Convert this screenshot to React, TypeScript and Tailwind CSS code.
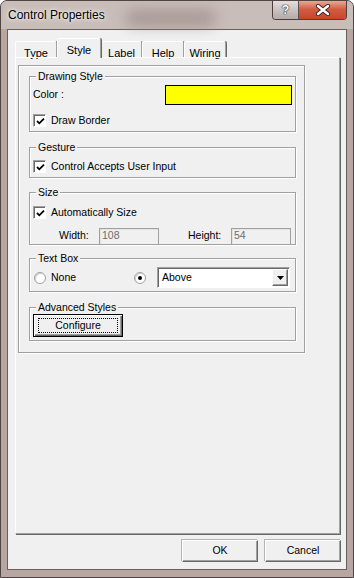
import type { ReactNode } from 'react'

const font = "font-['Liberation_Sans',Arial,sans-serif]"

function CheckBox({ checked }: { checked: boolean }) {
  return (
    <span className="flex h-[13px] w-[13px] shrink-0 items-center justify-center border border-t-[#a0a0a0] border-l-[#a0a0a0] border-r-white border-b-white bg-white shadow-[inset_1px_1px_0_#696969]">
      {checked && (
        <svg width="9" height="9" viewBox="0 0 9 9" className="ml-[1px] mt-[1px]">
          <polyline points="1,4 3.3,6.3 8,1.6" fill="none" stroke="#000" strokeWidth="1.8" />
        </svg>
      )}
    </span>
  )
}

function Radio({ checked }: { checked: boolean }) {
  return (
    <span className="flex h-[12px] w-[12px] shrink-0 items-center justify-center rounded-full border border-[#a0a0a0] bg-white shadow-[inset_1px_1px_0_#d0d0d0]">
      {checked && <span className="h-[4px] w-[4px] rounded-full bg-black" />}
    </span>
  )
}

function Group({ label, className, children }: { label: string; className: string; children: ReactNode }) {
  return (
    <div className={`relative border border-[#a0a0a0] shadow-[inset_1px_1px_0_#fff,1px_1px_0_#fff] ${className}`}>
      <span className="absolute -top-[7px] left-[6px] bg-[#f0f0f0] px-[2px] leading-[13px]">{label}</span>
      {children}
    </div>
  )
}

function Tab({ label, selected, width }: { label: string; selected?: boolean; width: string }) {
  if (selected) {
    return (
      <div
        className={`relative z-10 -mb-[1px] flex h-[20px] ${width} justify-center rounded-t-[2px] border-t border-l border-white border-r border-r-[#a0a0a0] bg-[#f0f0f0] pt-[3px] text-[11px] shadow-[1px_0_0_#696969]`}
      >
        {label}
      </div>
    )
  }
  return (
    <div
      className={`flex h-[16px] ${width} justify-center rounded-t-[2px] border-t border-l border-white border-r border-r-[#a0a0a0] bg-[#f0f0f0] pt-[3px] text-[11px] shadow-[1px_0_0_#696969]`}
    >
      {label}
    </div>
  )
}

function PushButton({ label, width }: { label: string; width: string }) {
  return (
    <div
      className={`flex h-[22px] ${width} items-center justify-center border border-t-white border-l-white border-r-[#696969] border-b-[#696969] bg-[#f0f0f0] shadow-[inset_-1px_-1px_0_#a0a0a0,-1px_-1px_0_#b5b5b5]`}
    >
      {label}
    </div>
  )
}

export default function App() {
  return (
    <div className={`${font} flex h-[578px] w-[354px] flex-col overflow-hidden rounded-t-[7px] border border-[#4f4644] bg-[#b8a6a2] text-[10.5px] text-black`}>
      {/* title bar */}
      <div className="relative flex h-[28px] shrink-0 items-center bg-[#c9bdb9] pl-[7px]">
        <div className="absolute left-[125px] top-[9px] h-[16px] w-[90px] rounded-full bg-[#8f807a] opacity-60 blur-[7px]" />
        <span className="relative text-[12px] [text-shadow:0_0_6px_#fff,0_0_3px_#fff]">Control Properties</span>
        <div className="absolute right-[6px] top-[-1px] flex h-[20px] overflow-hidden rounded-b-[4px] border border-t-0 border-[#4a3f3d]">
          <div className="flex w-[26px] items-center justify-center border-r border-[#5b5150] bg-gradient-to-b from-[#e6e2e1] via-[#cbc4c2] to-[#b5aba9]">
            <span className="text-[13px] font-bold leading-none text-white [text-shadow:0_0_1px_#222,0_0_1px_#222,0_0_1px_#222]">?</span>
          </div>
          <div className="flex w-[47px] items-center justify-center bg-gradient-to-b from-[#eab0a0] via-[#d05b40] to-[#c9452a]">
            <svg width="16" height="12" viewBox="0 0 16 12">
              <path d="M3 2 L13 10 M13 2 L3 10" stroke="#3a2420" strokeWidth="4.2" strokeLinecap="round" />
              <path d="M3 2 L13 10 M13 2 L3 10" stroke="#fff" strokeWidth="2.4" strokeLinecap="round" />
            </svg>
          </div>
        </div>
      </div>

      {/* client area */}
      <div className="mx-[6px] mb-[7px] flex flex-1 flex-col border border-[#6b5e5b] bg-[#f0f0f0]">
        <div className="ml-[7px] mt-[8px] flex h-[19px] items-end">
          <Tab label="Type" width="w-[42px]" />
          <Tab label="Style" width="w-[44px]" selected />
          <Tab label="Label" width="w-[41px]" />
          <Tab label="Help" width="w-[42px]" />
          <Tab label="Wiring" width="w-[42px]" />
        </div>

        <div className="ml-[7px] mr-[6px] h-[477px] border border-t-white border-l-white border-r-[#a0a0a0] border-b-[#a0a0a0] shadow-[1px_1px_0_#696969]">
          <div className="ml-[2px] mt-[7px] w-[287px] border border-[#a0a0a0] pb-[11px] pl-[10px] pr-[8px] pt-[10px] shadow-[inset_1px_1px_0_#fff,1px_1px_0_#fff]">
            <Group label="Drawing Style" className="h-[56px] pl-[3px] pr-[3px] pt-[8px]">
              <div className="flex h-[20px] items-center justify-between">
                <span>Color :</span>
                <span className="h-[20px] w-[127px] border border-black bg-[#ffff00]" />
              </div>
              <div className="mt-[8px] flex items-center gap-[5px]">
                <CheckBox checked />
                <span>Draw Border</span>
              </div>
            </Group>

            <Group label="Gesture" className="mt-[15px] h-[31px] pl-[3px] pt-[11px]">
              <div className="flex items-center gap-[5px]">
                <CheckBox checked />
                <span>Control Accepts User Input</span>
              </div>
            </Group>

            <Group label="Size" className="mt-[14px] h-[53px] pl-[3px] pt-[12px]">
              <div className="flex items-center gap-[5px]">
                <CheckBox checked />
                <span>Automatically Size</span>
              </div>
              <div className="mt-[7px] flex h-[17px] items-center">
                <span className="ml-[26px] w-[40px]">Width:</span>
                <span className="flex h-[17px] w-[60px] items-center border border-[#a0a0a0] pl-[2px] text-[#6d6d6d] shadow-[inset_1px_1px_0_#e3e3e3]">108</span>
                <span className="ml-[29px] w-[43px]">Height:</span>
                <span className="flex h-[17px] w-[60px] items-center border border-[#a0a0a0] pl-[2px] text-[#6d6d6d] shadow-[inset_1px_1px_0_#e3e3e3]">54</span>
              </div>
            </Group>

            <Group label="Text Box" className="mt-[13px] h-[34px] pt-[8px]">
              <div className="flex h-[21px] items-center">
                <span className="ml-[4px]">
                  <Radio checked={false} />
                </span>
                <span className="ml-[5px] w-[26px]">None</span>
                <span className="ml-[57px]">
                  <Radio checked />
                </span>
                <div className="ml-[11px] flex h-[21px] w-[133px] items-center border border-t-[#a0a0a0] border-l-[#a0a0a0] border-r-white border-b-white bg-white shadow-[inset_1px_1px_0_#696969]">
                  <span className="ml-[4px] flex-1">Above</span>
                  <span className="mr-[1px] flex h-[17px] w-[16px] items-center justify-center border border-t-white border-l-white border-r-[#696969] border-b-[#696969] bg-[#f0f0f0] shadow-[inset_-1px_-1px_0_#a0a0a0]">
                    <svg width="7" height="4" viewBox="0 0 7 4">
                      <polygon points="0,0 7,0 3.5,4" fill="#000" />
                    </svg>
                  </span>
                </div>
              </div>
            </Group>

            <Group label="Advanced Styles" className="mt-[15px] h-[34px] pl-[3px] pt-[6px]">
              <div className="flex h-[23px] w-[90px] items-center justify-center border border-black bg-[#f0f0f0] shadow-[inset_1px_1px_0_#fff,inset_-1px_-1px_0_#696969,inset_-2px_-2px_0_#a0a0a0]">
                <span className="flex h-[15px] w-[80px] items-center justify-center border border-dotted border-black">Configure</span>
              </div>
            </Group>
          </div>
        </div>

        <div className="mr-[5px] mt-[6px] flex justify-end gap-[7px]">
          <PushButton label="OK" width="w-[76px]" />
          <PushButton label="Cancel" width="w-[76px]" />
        </div>
      </div>
    </div>
  )
}
